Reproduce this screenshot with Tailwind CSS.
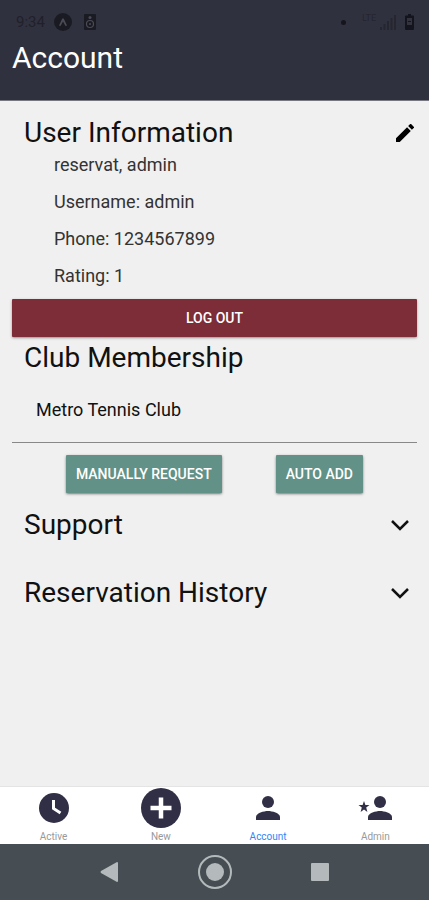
<!DOCTYPE html>
<html lang="en">
<head>
  <meta charset="UTF-8">
  <meta name="viewport" content="width=device-width, initial-scale=1.0">
  <title>Account</title>
  <script src="https://cdn.jsdelivr.net/npm/@tailwindcss/browser@4"></script>
</head>
<body class="min-h-screen flex flex-col bg-[#f0f0f0] text-[#111111] font-['Roboto',sans-serif]">
  <!-- Header -->
  <header class="bg-[#30313f] border-b border-[#77777f] h-[101px]">
    <!-- Status bar -->
    <div class="flex items-center h-11 pl-4 pr-[15px] text-[#20202a]">
      <span class="text-[15px] w-[38px]">9:34</span>
      <svg class="w-[18px] h-[18px]" viewBox="0 0 18 18">
        <circle cx="9" cy="9" r="9" fill="#1a1a22"/>
        <path d="M5 12.500L8.300 5.500h1.400L13 12.500l-1.500.6L9 8.500l-2.500 4.600z" fill="#4a4b56"/>
      </svg>
      <svg class="w-3 h-4 ml-3" viewBox="0 0 12 16">
        <rect width="12" height="16" rx="1" fill="#1a1a22"/>
        <circle cx="6" cy="3.500" r="1.500" fill="#4a4b56"/>
        <circle cx="6" cy="10" r="3.500" fill="none" stroke="#4a4b56" stroke-width="1.200"/>
        <circle cx="6" cy="10" r="1" fill="#4a4b56"/>
      </svg>
      <span class="w-[5px] h-[5px] rounded-full bg-[#15151d] ml-auto mr-4"></span>
      <span class="text-[9px] self-start mt-3 mr-1 text-[#25252f]">LTE</span>
      <svg class="w-4 h-4" viewBox="0 0 16 16" fill="#262630">
        <path d="M0 13h2v3H0zM3.500 10h2v6h-2zM7 7h2v9H7zM10.500 4h2v12h-2zM14 1h2v15h-2z"/>
      </svg>
      <svg class="w-[9px] h-4 ml-[9px]" viewBox="0 0 9 16">
        <path d="M3 0h3v1.500h2q1 0 1 1V15q0 1-1 1H1q-1 0-1-1V2.500q0-1 1-1h2z" fill="#14141c"/>
        <path d="M2 4h5v7H2z" fill="#32333f"/>
        <path d="M3 7h3v1H3z" fill="#14141c"/>
      </svg>
    </div>
    <h1 class="px-3 text-[30px] leading-7 text-white">Account</h1>
  </header>

  <main class="flex-1 px-3 pt-4">
    <!-- User info -->
    <section>
      <div class="flex items-center justify-between h-8 pl-3 pr-[3px]">
        <h2 class="text-[28px] leading-8">User Information</h2>
        <button aria-label="Edit user information">
          <svg class="w-[18px] h-[18px]" viewBox="3 3 18 18">
            <path d="M3 17.250V21h3.750L17.810 9.940l-3.750-3.750L3 17.250zM20.710 7.040a1 1 0 0 0 0-1.410l-2.340-2.340a1 1 0 0 0-1.410 0l-1.830 1.830 3.750 3.750 1.830-1.830z"/>
          </svg>
        </button>
      </div>
      <div class="flex flex-col gap-[13px] pl-[42px] pt-1 text-lg leading-6 text-[#333333]">
        <p>reservat, admin</p>
        <p>Username: admin</p>
        <p>Phone: 1234567899</p>
        <p>Rating: 1</p>
      </div>
      <button class="w-full h-[38px] mt-[11px] rounded-[1px] bg-[#7d2d38] text-white text-[14px] font-medium shadow-sm shadow-black/30">LOG OUT</button>
    </section>

    <!-- Membership -->
    <section>
      <h2 class="pl-3 pt-[5px] text-[28px] leading-8">Club Membership</h2>
      <p class="pl-6 pt-6 pb-5 text-lg leading-6 border-b border-[#888888]">Metro Tennis Club</p>
      <div class="flex justify-evenly pt-3">
        <button class="h-[38px] px-[10px] rounded-[1px] bg-[#629187] text-white text-[14px] font-medium shadow-sm shadow-black/40">MANUALLY REQUEST</button>
        <button class="h-[38px] px-[10px] rounded-[1px] bg-[#629187] text-white text-[14px] font-medium shadow-sm shadow-black/40">AUTO ADD</button>
      </div>
    </section>

    <!-- Collapsed sections -->
    <section class="flex flex-col gap-9 pt-4">
      <button class="flex items-center justify-between pl-3 pr-2 text-[28px] leading-8">
        Support
        <svg class="w-[18px] h-3" viewBox="0 0 18 12" fill="none" stroke="#111111" stroke-width="2.500">
          <path d="M1 2l8 8 8-8"/>
        </svg>
      </button>
      <button class="flex items-center justify-between pl-3 pr-2 text-[28px] leading-8">
        Reservation History
        <svg class="w-[18px] h-3" viewBox="0 0 18 12" fill="none" stroke="#111111" stroke-width="2.500">
          <path d="M1 2l8 8 8-8"/>
        </svg>
      </button>
    </section>
  </main>

  <!-- Tab bar -->
  <nav class="grid grid-cols-4 h-[58px] bg-white border-t border-[#e4e4e4] text-[10px] leading-4 text-[#999999]">
    <a href="#" class="flex flex-col items-center">
      <span class="h-[42px] flex items-center">
        <svg class="w-[30px] h-[30px]" viewBox="0 0 30 30">
          <circle cx="15" cy="15" r="15" fill="#302f45"/>
          <path d="M14.500 7v8.500l7 4.500" fill="none" stroke="#ffffff" stroke-width="3"/>
        </svg>
      </span>
      Active
    </a>
    <a href="#" class="flex flex-col items-center">
      <span class="h-[42px] flex items-center">
        <svg class="w-10 h-10" viewBox="0 0 40 40">
          <circle cx="20" cy="20" r="20" fill="#302f45"/>
          <path d="M20 9.500v21M9.500 20h21" stroke="#ffffff" stroke-width="4.500"/>
        </svg>
      </span>
      New
    </a>
    <a href="#" class="flex flex-col items-center text-[#2f86f6]">
      <span class="h-[42px] flex items-center">
        <svg class="w-6 h-6" viewBox="0 0 24 24" fill="#302f45">
          <circle cx="12" cy="6" r="6"/>
          <path d="M0 24v-3c0-4 8-6 12-6s12 2 12 6v3z"/>
        </svg>
      </span>
      Account
    </a>
    <a href="#" class="flex flex-col items-center">
      <span class="h-[42px] flex items-center">
        <svg class="w-[34px] h-6" viewBox="-1 0 34 24" fill="#302f45">
          <circle cx="21" cy="6" r="6"/>
          <path d="M9 24v-3c0-4 8-6 12-6s12 2 12 6v3z"/>
          <path d="M5 5l1.400 4H10.500l-3.300 2.600L8.400 16 5 13.500 1.600 16l1.200-4.400L-.5 9h4.100z"/>
        </svg>
      </span>
      Admin
    </a>
  </nav>

  <!-- System buttons -->
  <footer class="flex items-center justify-between h-14 px-[100px] bg-[#464e53] text-[#b4babc]">
    <button aria-label="Back">
      <svg class="w-[18px] h-5" viewBox="0 0 18 20" fill="currentColor"><path d="M18 1v18q0 1-1 1L1 11q-1-1 0-2L17 0q1 0 1 1z"/></svg>
    </button>
    <button aria-label="Home">
      <svg class="w-[34px] h-[34px]" viewBox="0 0 34 34">
        <circle cx="17" cy="17" r="16" fill="none" stroke="currentColor" stroke-width="2"/>
        <circle cx="17" cy="17" r="9" fill="currentColor"/>
      </svg>
    </button>
    <button aria-label="Recent apps">
      <svg class="w-[18px] h-[18px]" viewBox="0 0 18 18" fill="currentColor"><rect width="18" height="18" rx="1"/></svg>
    </button>
  </footer>
</body>
</html>
